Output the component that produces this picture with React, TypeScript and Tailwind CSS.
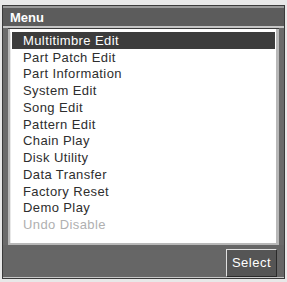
import React from 'react';

const items = [
  'Multitimbre Edit',
  'Part Patch Edit',
  'Part Information',
  'System Edit',
  'Song Edit',
  'Pattern Edit',
  'Chain Play',
  'Disk Utility',
  'Data Transfer',
  'Factory Reset',
  'Demo Play',
  'Undo Disable',
];

export default function App() {
  const selected = 0;
  const disabled = 'Undo Disable';

  return (
    <div className="w-[287px] h-[282px] bg-[#e8e8e8] px-[2px] pt-[5px] pb-[3px]" style={{ fontFamily: '"Liberation Sans", Arial, sans-serif' }}>
      <div className="flex h-full flex-col border border-[#3a3a3a] bg-[#5e5e5e]">
        {/* Title */}
        <div className="flex h-[20px] shrink-0 items-center border-t-2 border-[#9a9a9a] bg-[#5c5c5c] pl-[7px]">
          <span className="text-[13px] font-bold leading-none text-white">Menu</span>
        </div>
        <div className="h-[2px] shrink-0 bg-[#c4c4c4]" />

        {/* List */}
        <div className="flex flex-1 flex-col bg-[#6a6a6a] px-[5px]">
          <div className="border-t border-[#3a3a3a]" />
          <div className="flex flex-1 border-l-2 border-r-[3px] border-[#b8b8b8] bg-white pt-[3px]">
            <div className="flex-1 border-l border-[#e8e8e8] px-[1px]">
              {items.map((item, i) => (
                <div
                  key={item}
                  className={
                    'flex h-[16.75px] items-center pl-[11px] text-[13px] leading-none tracking-[0.4px] ' +
                    (i === selected
                      ? 'bg-[#3c3c3c] text-white'
                      : item === disabled
                        ? 'text-[#b0b0b0]'
                        : 'text-[#2e2e2e]')
                  }
                >
                  {item}
                </div>
              ))}
            </div>
          </div>
          <div className="h-[2px] shrink-0 bg-[#b8b8b8]" />
        </div>

        {/* Bottom bar */}
        <div className="flex h-[33px] shrink-0 items-center justify-end border-b border-[#c8c8c8] bg-[#666666] pr-[7px] pt-[3px]">
          <div className="flex h-[28px] w-[51px] items-center justify-center border border-t-[#e0e0e0] border-l-[#e0e0e0] border-r-[#2a2a2a] border-b-[#2a2a2a] bg-[#555555]">
            <span className="text-[13px] leading-none tracking-[0.5px] text-white">Select</span>
          </div>
        </div>
      </div>
    </div>
  );
}
